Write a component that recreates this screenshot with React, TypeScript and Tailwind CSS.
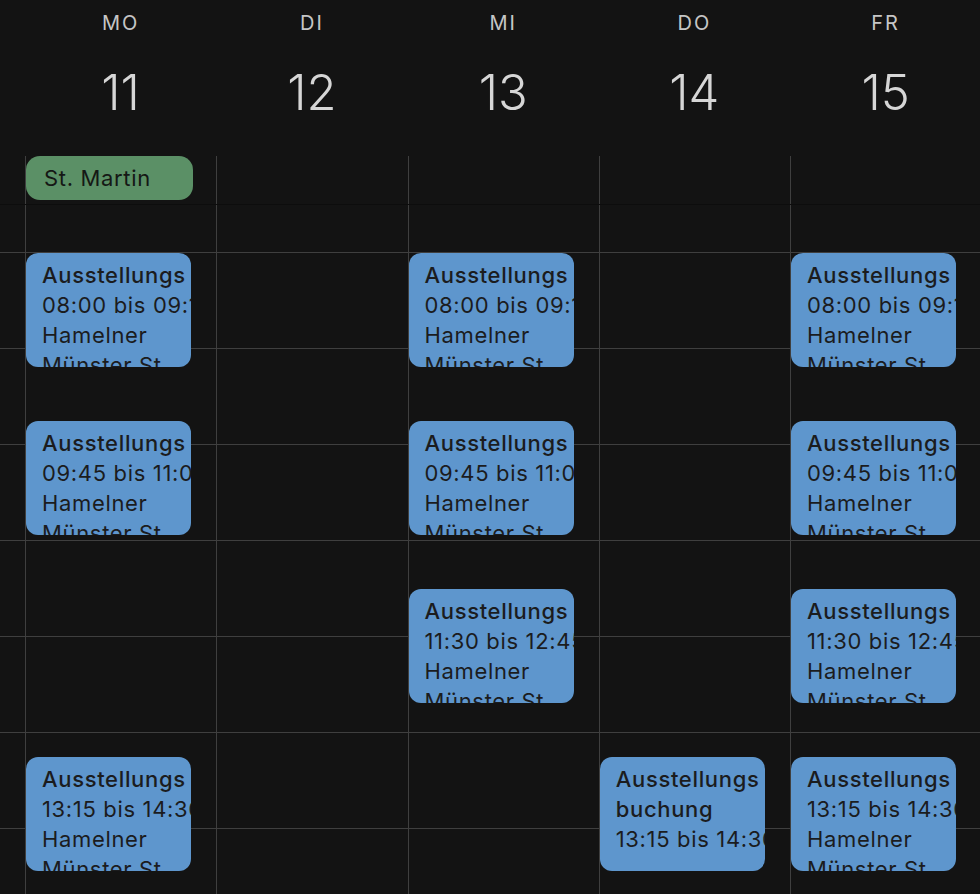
import React from 'react';

/* ---- Layout ---- */
const HOUR_PX = 96;
const FIRST_HOUR = 7; // row above 8:00, scrolled mostly out of view
const HOURS = [7, 8, 9, 10, 11, 12, 13, 14];

type CalEvent = {
  start: number; // hours, e.g. 9.75 = 09:45
  end: number;
  lines: string[];
  time: string;
  place?: string;
};

const slot = (start: number, end: number, time: string): CalEvent => ({
  start,
  end,
  time,
  lines: ['Ausstellungs'],
  place: 'Hamelner Münster St. Bonifatius',
});

const DAYS: { name: string; date: number; allDay?: string; events: CalEvent[] }[] = [
  {
    name: 'MO',
    date: 11,
    allDay: 'St. Martin',
    events: [
      slot(8, 9.25, '08:00 bis 09:15'),
      slot(9.75, 11, '09:45 bis 11:00'),
      slot(13.25, 14.5, '13:15 bis 14:30'),
    ],
  },
  { name: 'DI', date: 12, events: [] },
  {
    name: 'MI',
    date: 13,
    events: [
      slot(8, 9.25, '08:00 bis 09:15'),
      slot(9.75, 11, '09:45 bis 11:00'),
      slot(11.5, 12.75, '11:30 bis 12:45'),
    ],
  },
  {
    name: 'DO',
    date: 14,
    events: [{ start: 13.25, end: 14.5, time: '13:15 bis 14:30', lines: ['Ausstellungs', 'buchung'] }],
  },
  {
    name: 'FR',
    date: 15,
    events: [
      slot(8, 9.25, '08:00 bis 09:15'),
      slot(9.75, 11, '09:45 bis 11:00'),
      slot(11.5, 12.75, '11:30 bis 12:45'),
      slot(13.25, 14.5, '13:15 bis 14:30'),
    ],
  },
];

function EventCard({ ev }: { ev: CalEvent }) {
  const top = (ev.start - FIRST_HOUR) * HOUR_PX + 1;
  const height = (ev.end - ev.start) * HOUR_PX - 6;
  return (
    <div
      className="absolute left-0 w-[165px] overflow-hidden rounded-[12px] bg-[#5e96cd] pl-4 pt-[7px] text-[22px] leading-[30px] tracking-[0.03em] text-[#1b1c1e]"
      style={{ top, height }}
    >
      {ev.lines.map((l) => (
        <div key={l} className="whitespace-nowrap font-medium">
          {l}
        </div>
      ))}
      <div className="whitespace-nowrap">{ev.time}</div>
      {ev.place && <div className="w-[145px]">{ev.place}</div>}
    </div>
  );
}

export default function App() {
  return (
    <div className="h-[894px] w-[980px] overflow-hidden bg-[#131313] font-['Inter',sans-serif]">
      {/* Day header */}
      <div className="grid h-[155px] grid-cols-[25px_repeat(5,191.25px)]">
        <div />
        {DAYS.map((d) => (
          <div key={d.name} className="flex flex-col items-center">
            <div className="mt-[10px] text-[20px] leading-[26px] tracking-[0.1em] text-[#c6c6c6]">
              {d.name}
            </div>
            <div className="mt-[27px] text-[49px] font-light leading-[60px] text-[#d6d6d6]">
              {d.date}
            </div>
          </div>
        ))}
      </div>

      {/* All-day row */}
      <div className="grid h-[50px] grid-cols-[25px_repeat(5,191.25px)] border-b border-[#0d0d0d]">
        <div />
        {DAYS.map((d) => (
          <div key={d.name} className="mt-px border-l border-[#3f3f3f]">
            {d.allDay && (
              <div className="h-[44px] w-[167px] rounded-[14px] bg-[#5b9066] pl-[18px] text-[22px] leading-[44px] tracking-[0.03em] text-[#151815]">
                {d.allDay}
              </div>
            )}
          </div>
        ))}
      </div>

      {/* Time grid */}
      <div className="h-[689px] overflow-hidden">
        <div className="-mt-[49px] grid grid-cols-[25px_repeat(5,191.25px)]">
          <div>
            {HOURS.map((h) => (
              <div key={h} className="h-[96px] border-t border-[#3f3f3f]" />
            ))}
          </div>
          {DAYS.map((d) => (
            <div key={d.name} className="relative border-l border-[#3f3f3f]">
              {HOURS.map((h) => (
                <div key={h} className="h-[96px] border-t border-[#3f3f3f]" />
              ))}
              {d.events.map((ev) => (
                <EventCard key={ev.time} ev={ev} />
              ))}
            </div>
          ))}
        </div>
      </div>
    </div>
  );
}
